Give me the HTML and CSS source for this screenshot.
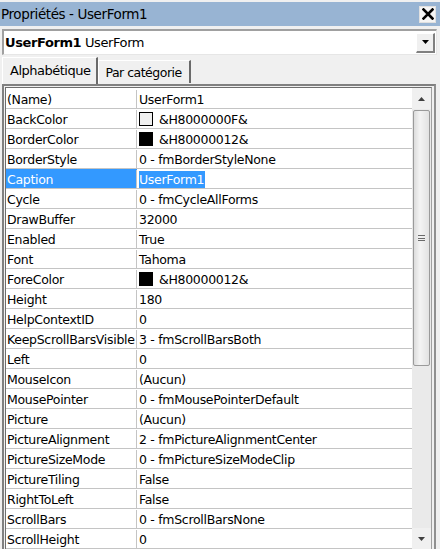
FILE: index.html
```html
<!DOCTYPE html>
<html>
<head>
<meta charset="utf-8">
<link rel="stylesheet" href="styles.css">
</head>
<body>
<div class="window">
  <div class="titlebar">
    <span class="title">Propriétés - UserForm1</span>
    <span class="close"><svg width="12" height="12" viewBox="0 0 12 12"><path d="M1.5 1.5 L10.5 10.5 M10.5 1.5 L1.5 10.5" stroke="#000" stroke-width="2.6" stroke-linecap="square"/></svg></span>
  </div>
  <div class="combo">
    <span class="combo-text"><b>UserForm1</b> UserForm</span>
    <span class="combo-btn"><svg width="7" height="4" viewBox="0 0 7 4"><path d="M0 0 H7 L3.5 4 Z" fill="#000"/></svg></span>
  </div>
  <div class="tabs">
    <span class="tab active">Alphabétique</span>
    <span class="tab">Par catégorie</span>
  </div>
  <div class="grid-frame">
    <div class="grid">
      <div class="rows">
        <div class="row"><span class="name">(Name)</span><span class="val">UserForm1</span></div>
        <div class="row"><span class="name">BackColor</span><span class="val"><i class="sw light"></i>&amp;H8000000F&amp;</span></div>
        <div class="row"><span class="name">BorderColor</span><span class="val"><i class="sw dark"></i>&amp;H80000012&amp;</span></div>
        <div class="row"><span class="name">BorderStyle</span><span class="val">0 - fmBorderStyleNone</span></div>
        <div class="row sel"><span class="name">Caption</span><span class="val"><span class="hl">UserForm1</span></span></div>
        <div class="row"><span class="name">Cycle</span><span class="val">0 - fmCycleAllForms</span></div>
        <div class="row"><span class="name">DrawBuffer</span><span class="val">32000</span></div>
        <div class="row"><span class="name">Enabled</span><span class="val">True</span></div>
        <div class="row"><span class="name">Font</span><span class="val">Tahoma</span></div>
        <div class="row"><span class="name">ForeColor</span><span class="val"><i class="sw dark"></i>&amp;H80000012&amp;</span></div>
        <div class="row"><span class="name">Height</span><span class="val">180</span></div>
        <div class="row"><span class="name">HelpContextID</span><span class="val">0</span></div>
        <div class="row"><span class="name">KeepScrollBarsVisible</span><span class="val">3 - fmScrollBarsBoth</span></div>
        <div class="row"><span class="name">Left</span><span class="val">0</span></div>
        <div class="row"><span class="name">MouseIcon</span><span class="val">(Aucun)</span></div>
        <div class="row"><span class="name">MousePointer</span><span class="val">0 - fmMousePointerDefault</span></div>
        <div class="row"><span class="name">Picture</span><span class="val">(Aucun)</span></div>
        <div class="row"><span class="name">PictureAlignment</span><span class="val">2 - fmPictureAlignmentCenter</span></div>
        <div class="row"><span class="name">PictureSizeMode</span><span class="val">0 - fmPictureSizeModeClip</span></div>
        <div class="row"><span class="name">PictureTiling</span><span class="val">False</span></div>
        <div class="row"><span class="name">RightToLeft</span><span class="val">False</span></div>
        <div class="row"><span class="name">ScrollBars</span><span class="val">0 - fmScrollBarsNone</span></div>
        <div class="row"><span class="name">ScrollHeight</span><span class="val">0</span></div>
      </div>
      <div class="vscroll">
        <div class="arrow up"><svg width="7" height="4" viewBox="0 0 7 4"><path d="M0 4 H7 L3.5 0 Z" fill="#404040"/></svg></div>
        <div class="track">
          <div class="thumb"><span class="grip"></span></div>
        </div>
        <div class="arrow down"><svg width="7" height="4" viewBox="0 0 7 4"><path d="M0 0 H7 L3.5 4 Z" fill="#404040"/></svg></div>
      </div>
    </div>
  </div>
</div>
</body>
</html>
```

FILE: styles.css
```css
* { box-sizing: border-box; }
html, body { margin: 0; padding: 0; }
body {
  width: 440px;
  height: 549px;
  overflow: hidden;
  background: #f0f0f0;
  font-family: "DejaVu Sans", Tahoma, sans-serif;
  font-size: 12px;
  color: #000;
}
.window {
  display: flex;
  flex-direction: column;
  height: 549px;
  padding-top: 2px;
}
.titlebar {
  height: 25px;
  background: #98b4d3;
  display: flex;
  align-items: center;
  justify-content: space-between;
  padding: 0 4px 0 1px;
  font-size: 13.5px;
}
.title { letter-spacing: -0.4px; }
.close {
  width: 17px;
  height: 17px;
  background: #f4f4f4;
  border: 1px solid #e0e0e0;
  display: flex;
  align-items: center;
  justify-content: center;
}
.combo {
  margin: 3px 3px 0 2px;
  height: 26px;
  background: #fff;
  border-top: 2px solid #a0a0a0;
  border-left: 2px solid #a0a0a0;
  border-bottom: 1px solid #e6e6e6;
  border-right: 1px solid #e6e6e6;
  display: flex;
  align-items: center;
  justify-content: space-between;
  padding-left: 1px;
  font-size: 13px;
}
.combo-text { letter-spacing: -0.4px; }
.combo-btn {
  width: 19px;
  height: 20px;
  background: #f0f0f0;
  border-right: 2px solid #808080;
  border-bottom: 2px solid #808080;
  border-top: 1px solid #fff;
  border-left: 1px solid #fff;
  display: flex;
  align-items: center;
  justify-content: center;
  margin-right: 1px;
}
.tabs {
  display: flex;
  align-items: flex-end;
  height: 30px;
  padding-left: 2px;
}
.tab {
  height: 23px;
  padding: 0 7px 0 6px;
  display: flex;
  align-items: center;
  font-size: 12.5px;
  letter-spacing: -0.5px;
  border-top: 1px solid #fff;
  border-left: 1px solid #fff;
  border-right: 2px solid #6a6a6a;
  margin-bottom: 1px;
}
.tab.active {
  height: 27px;
  padding: 0 6px 2px 7px;
  margin-bottom: 0;
  font-size: 13px;
}
.grid-frame {
  flex: 1;
  margin: 0 4px 0 2px;
  border-top: 2px solid #808080;
  border-left: 2px solid #808080;
  border-right: 2px solid #909090;
  padding: 1px 2px 0 1px;
  background: #f0f0f0;
}
.grid {
  height: 100%;
  display: flex;
  border-top: 1px solid #6e6e6e;
  border-left: 1px solid #6e6e6e;
  border-right: 1px solid #a0a0a0;
  background: #fff;
  padding-top: 1px;
}
.rows {
  flex: 1;
  display: flex;
  flex-direction: column;
}
.row {
  height: 20px;
  flex: none;
  display: flex;
  border-bottom: 1px solid #c4c4c4;
  font-size: 12.5px;
  padding-top: 1px;
}
.name {
  width: 131px;
  flex: none;
  padding-left: 1px;
  border-right: 1px solid #c4c4c4;
  display: flex;
  align-items: center;
  white-space: nowrap;
  overflow: hidden;
  letter-spacing: -0.3px;
}
.val {
  flex: 1;
  padding-left: 2px;
  display: flex;
  align-items: center;
  white-space: nowrap;
  letter-spacing: -0.3px;
}
.row.sel { background: linear-gradient(to right, #3399ff 131px, #fff 131px); }
.row.sel .name { color: #fff; }
.hl { background: #3399ff; color: #fff; padding: 0 1px 0 0; line-height: 17px; }
.sw {
  width: 14px;
  height: 14px;
  margin-right: 6px;
  border: 1px solid #000;
  flex: none;
}
.sw.light { background: #f0f0f0; }
.sw.dark { background: #000; }
.vscroll {
  width: 19px;
  flex: none;
  display: flex;
  flex-direction: column;
  background: #eaeaea;
  margin-top: -1px;
}
.arrow {
  height: 21px;
  display: flex;
  align-items: center;
  justify-content: center;
  background: #f0f0f0;
}
.track {
  flex: 1;
  padding: 1px 1px;
}
.thumb {
  height: 256px;
  background: linear-gradient(to right, #dcdcdc, #f4f4f4 40%, #e2e2e2);
  border: 1px solid #9a9a9a;
  border-radius: 2px;
  display: flex;
  align-items: center;
  justify-content: center;
}
.grip {
  width: 7px;
  height: 6px;
  border-top: 1px solid #6a6a6a;
  border-bottom: 1px solid #6a6a6a;
  position: relative;
}
.grip::after {
  content: "";
  position: absolute;
  left: 0;
  right: 0;
  top: 1.5px;
  border-top: 1px solid #6a6a6a;
}
```
